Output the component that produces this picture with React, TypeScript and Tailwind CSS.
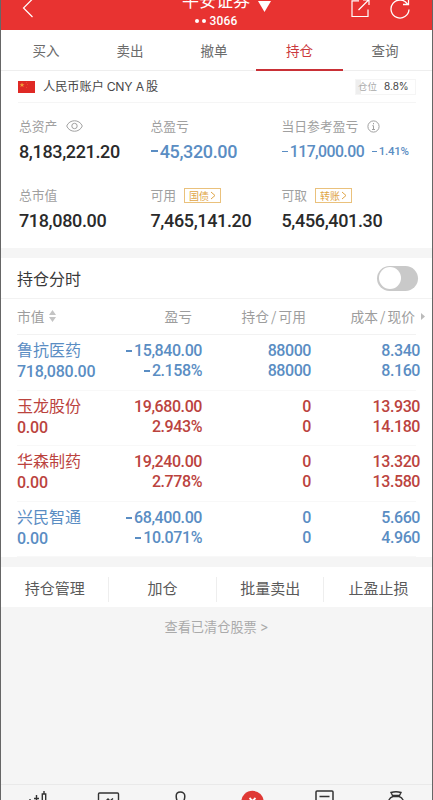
import React from "react";

const BLUE = "text-[#5a8dc3]";
const RED = "text-[#bb433e]";

const stocks = [
  { name: "鲁抗医药", value: "718,080.00", profit: "-15,840.00", rate: "-2.158%", held: "88000", free: "88000", cost: "8.340", price: "8.160", color: BLUE },
  { name: "玉龙股份", value: "0.00", profit: "19,680.00", rate: "2.943%", held: "0", free: "0", cost: "13.930", price: "14.180", color: RED },
  { name: "华森制药", value: "0.00", profit: "19,240.00", rate: "2.778%", held: "0", free: "0", cost: "13.320", price: "13.580", color: RED },
  { name: "兴民智通", value: "0.00", profit: "-68,400.00", rate: "-10.071%", held: "0", free: "0", cost: "5.660", price: "4.960", color: BLUE },
];

function Num({ children }: { children: string }) {
  const negative = children.startsWith("-");
  return (
    <span className="flex items-center font-[Roboto] font-medium">
      {negative && <span className="mr-[2px] h-[0.125em] w-[0.4em] bg-current" />}
      {negative ? children.slice(1) : children}
    </span>
  );
}

function Header() {
  return (
    <header className="grid h-[30px] grid-cols-[1fr_120px_1fr] overflow-hidden bg-[#e83331] text-white">
      <svg className="ml-[20px] h-[20px] w-[14px]" viewBox="0 0 14 20" fill="none" stroke="currentColor" strokeWidth="1.2">
        <path d="M11.5 -1L2.5 8L11.5 17" />
      </svg>
      <div className="flex flex-col items-center">
        <div className="-mt-[11px] ml-[20px] flex h-[22px] items-center gap-[8px] whitespace-nowrap text-[17px] leading-[22px]">
          <span>平安证券</span>
          <svg className="mt-[12px] h-[11px] w-[13px]" viewBox="0 0 13 11" fill="currentColor">
            <path d="M0 0H13L6.5 11Z" />
          </svg>
        </div>
        <div className="flex h-[20px] items-center gap-[3px] font-[Roboto] text-[12px] leading-[20px] tracking-[0.2px]">
          <i className="size-[4px] rounded-full bg-white" />
          <i className="size-[4px] rounded-full bg-white" />
          <span className="font-medium">3066</span>
        </div>
      </div>
      <div className="flex justify-end gap-[20px] pr-[22px]">
        <svg className="h-[20px] w-[19px]" viewBox="0 0 19 20" fill="none" stroke="currentColor" strokeWidth="1.2">
          <path d="M8 .8H1V16.5H17V9.5M7.5 10L17.5 0M12 0H18V5" />
        </svg>
        <svg className="h-[20px] w-[20px]" viewBox="0 0 20 20" fill="none" stroke="currentColor" strokeWidth="1.3">
          <path d="M17.5 4A9 9 0 1 0 19 9.5M18.5 -1V4.5H13" />
        </svg>
      </div>
    </header>
  );
}

function Tabs() {
  return (
    <nav className="flex h-[41px] border-b border-[#eeeeee] px-px text-[13.5px] text-[#6b6b6b]">
      {["买入", "卖出", "撤单", "持仓", "查询"].map((t) => (
        <div key={t} className={`flex h-[41px] items-center justify-center border-b-2 pt-px first:ml-[2px] ${t === "持仓" ? "w-[87px] border-[#c93036] text-[#cb393d]" : "w-[84px] border-transparent"}`}>
          {t}
        </div>
      ))}
    </nav>
  );
}

function Account() {
  return (
    <div className="ml-[17px] mr-[16px] flex h-[32px] items-center border-b border-[#f5f5f5]">
      <svg className="h-[12px] w-[17px]" viewBox="0 0 17 12">
        <rect width="17" height="12" fill="#df2925" />
        <path d="M4 1.5L4.7 3.3H6.5L5 4.3L5.6 6.1L4 5L2.4 6.1L3 4.3L1.5 3.3H3.3Z" fill="#f2a13b" />
        <path d="M8 1h.8v.8H8zM9 3h.8v.8H9zM8 6h.8v.8H8z" fill="#e96a32" />
      </svg>
      <span className="ml-[8px] text-[12.2px] text-[#484848]">人民币账户 <span className="font-[Inter] tracking-[-0.2px]">CNY A</span><span className="ml-[2px]">股</span></span>
      <div className="ml-auto flex h-[16px] w-[61px] items-center border border-[#f5f5f5] bg-[linear-gradient(90deg,#eeeeee_8.8%,#ffffff_8.8%)] pl-[2px] text-[9.5px]">
        <span className="text-[#aaa]">仓位</span>
        <span className="ml-[7px] font-[Inter] text-[10px] text-[#444]">8.8%</span>
      </div>
    </div>
  );
}

function Tag({ text }: { text: string }) {
  return (
    <span className="ml-[8px] flex h-[15px] w-[37px] items-center justify-center border border-[#eac17c] text-[10px] text-[#e0a546]">
      {text}
      <svg className="ml-px h-[9px] w-[6px]" viewBox="0 0 6 9" fill="none" stroke="currentColor"><path d="M1 1L5 4.5L1 8" /></svg>
    </span>
  );
}

function Metric({ label, extra, children }: { label: string; extra?: React.ReactNode; children: React.ReactNode }) {
  return (
    <div className="whitespace-nowrap">
      <div className="flex h-[20px] items-center text-[12.8px] text-[#a0a0a0]">{label}{extra}</div>
      <div className="mt-[3px] flex h-[24px] items-center text-[18px] tracking-[-0.36px] text-[#2a2a2a]">{children}</div>
    </div>
  );
}

function Summary() {
  return (
    <section className="grid h-[145px] grid-cols-[131.5px_131px_1fr] grid-rows-[69px_1fr] pl-[18px] pt-[13px]">
      <Metric label="总资产" extra={
        <svg className="ml-[9px] h-[12px] w-[17px]" viewBox="0 0 17 12" fill="none" stroke="currentColor">
          <path d="M.7 6C3.5 -1 13.5 -1 16.3 6C13.5 13 3.5 13 .7 6Z" /><circle cx="8.5" cy="6" r="2.7" />
        </svg>}>
        <Num>8,183,221.20</Num>
      </Metric>
      <Metric label="总盈亏"><span className={BLUE}><Num>-45,320.00</Num></span></Metric>
      <Metric label="当日参考盈亏" extra={
        <svg className="ml-[9px] size-[13px]" viewBox="0 0 13 13" fill="none" stroke="currentColor">
          <circle cx="6.5" cy="6.5" r="5.6" /><path d="M6.5 3V4.3M5.3 5.7H6.5V9.5M5 9.5H8" />
        </svg>}>
        <span className={`flex items-center pt-px text-[15.8px] tracking-[-0.55px] ${BLUE}`}>
          <Num>-117,000.00</Num>
          <span className="ml-[8px] flex text-[11.5px] tracking-[-0.25px]"><Num>-1.41%</Num></span>
        </span>
      </Metric>
      <Metric label="总市值"><Num>718,080.00</Num></Metric>
      <Metric label="可用" extra={<Tag text="国债" />}><Num>7,465,141.20</Num></Metric>
      <Metric label="可取" extra={<Tag text="转账" />}><Num>5,456,401.30</Num></Metric>
    </section>
  );
}

function Holdings() {
  return (
    <section>
      <div className="flex h-[41px] items-center justify-between border-b border-[#f2f2f2] pl-[16px] pr-[14px]">
        <h2 className="pb-px text-[16px] text-[#3a3a3a]">持仓分时</h2>
        <div className="flex h-[25px] w-[41px] items-center rounded-full bg-[#c9c9c9] px-[2px]"><i className="size-[22px] rounded-full bg-white" /></div>
      </div>
      <div className="mx-[16px] grid h-[36px] grid-cols-[84px_91px_114px_1fr] items-center border-b border-[#f2f2f2] text-[13.7px] text-[#9d9d9d]">
        <div className="flex items-center">市值
          <svg className="ml-[5px] h-[12px] w-[7px]" viewBox="0 0 7 12" fill="#c4c4c4"><path d="M0 5L3.5 0L7 5ZM0 7H7L3.5 12Z" /></svg>
        </div>
        <div className="text-right">盈亏</div>
        <div className="text-right">持仓<span className="mx-[2.2px]">/</span>可用</div>
        <div className="relative pr-px text-right">成本<span className="mx-[2.2px]">/</span>现价
          <svg className="absolute right-[-9px] top-[7px] h-[7px] w-[4px]" viewBox="0 0 4 7" fill="#bbbbbb"><path d="M0 0L4 3.5L0 7Z" /></svg>
        </div>
      </div>
      {stocks.map((s) => (
        <div key={s.name} className={`mx-[16px] grid h-[55.5px] grid-cols-[84px_101px_109px_1fr] border-b border-[#f8f8f8] pt-[5px] text-[16px] leading-[20px] ${s.color}`}>
          <div>
            <div className="-mt-px h-[23px] whitespace-nowrap">{s.name}</div>
            <div className="tracking-[-0.25px]"><Num>{s.value}</Num></div>
          </div>
          {[[s.profit, s.rate], [s.held, s.free], [s.cost, s.price]].map((pair, i) => (
            <div key={i} className={`flex flex-col items-end pt-px tracking-[-0.42px] ${i === 2 ? "-mr-[4px]" : ""}`}>
              {pair.map((v, j) => <div key={j} className="h-[20px]"><Num>{v}</Num></div>)}
            </div>
          ))}
        </div>
      ))}
    </section>
  );
}

function BottomBar() {
  return (
    <footer className="mt-auto grid h-[16px] grid-cols-6 justify-items-center overflow-hidden border-t border-[#e9e9e9] text-[#333]">
      <svg className="h-[15px] w-[28px]" viewBox="0 0 28 15" fill="none" stroke="currentColor" strokeWidth="1.4"><path d="M7 14V17M13.5 10V16M11 13.5H16M21 6V9M19.3 9H22.7V16H19.3Z" /></svg>
      <svg className="h-[15px] w-[28px]" viewBox="0 0 28 15" fill="none" stroke="currentColor" strokeWidth="1.4"><path d="M3.5 18V9Q3.5 8 4.5 8H22.5Q23.5 8 23.5 9V18M10 17L13 14L15 16L18 13.5" /></svg>
      <svg className="h-[15px] w-[28px]" viewBox="0 0 28 15" fill="none" stroke="currentColor" strokeWidth="1.5"><path d="M11 17C9.2 15 9.2 13 9.2 11C9.2 5.7 17.8 5.7 17.8 11C17.8 13 17.8 15 16 17" /></svg>
      <svg className="h-[15px] w-[28px]" viewBox="0 0 28 15"><circle cx="14.5" cy="17" r="11.2" fill="#df3935" /><path d="M11.5 13L14.5 16L17.5 13" stroke="white" strokeWidth="1.8" fill="none" /></svg>
      <svg className="h-[15px] w-[28px]" viewBox="0 0 28 15" fill="none" stroke="currentColor" strokeWidth="1.5"><path d="M6 18V7Q6 6 7 6H22Q23 6 23 7V18M9.5 11.5H19.5" /></svg>
      <svg className="h-[15px] w-[28px]" viewBox="0 0 28 15" fill="none" stroke="currentColor" strokeWidth="1.4"><path d="M10.5 10.5L9 7.5Q14 6 19 7.5L17.5 10.5ZM6 18Q7 12.5 11 11.5H17Q21 12.5 22 18" /></svg>
    </footer>
  );
}

export default function App() {
  return (
    <main className="flex h-[800px] w-[433px] flex-col overflow-hidden border-x border-[#666] bg-[#f5f5f5] font-['Noto_Sans_CJK_SC',sans-serif]">
      <Header />
      <div className="h-[218px] bg-white"><Tabs /><Account /><Summary /></div>
      <div className="mt-[10px] h-[299px] bg-white"><Holdings /></div>
      <div className="mt-[10px] grid h-[40px] grid-cols-4 divide-x divide-[#eee] bg-white text-[15px] text-[#5a5a5a]">
        {["持仓管理", "加仓", "批量卖出", "止盈止损"].map((t) => <div key={t} className="my-[10px] flex items-center justify-center pb-[2px] pl-px">{t}</div>)}
      </div>
      <div className="mt-[10px] text-center text-[13.2px] leading-[20px] text-[#aaa]">查看已清仓股票 <span className="font-[Inter]">&gt;</span></div>
      <BottomBar />
    </main>
  );
}
